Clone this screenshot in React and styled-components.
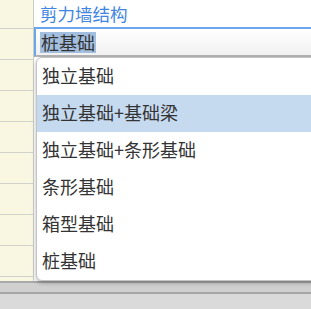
import React from 'react'
import styled, { createGlobalStyle } from 'styled-components'

const GlobalStyle = createGlobalStyle`
  html, body {
    margin: 0;
    padding: 0;
    background: #fff;
    overflow: hidden;
  }
  body {
    font-family: "Noto Sans CJK SC", "Noto Sans", sans-serif;
  }
`

const Frame = styled.div`
  position: relative;
  width: 311px;
  height: 309px;
  display: flex;
  flex-direction: column;
  overflow: hidden;
`

const Sheet = styled.div`
  display: flex;
  height: 281px;
`

const Gutter = styled.div`
  width: 33px;
  background: #f9f6e2;
  border-right: 1px solid #cdcdc8;
  display: flex;
  flex-direction: column;
`

const GutterRow = styled.div`
  height: ${props => props.h}px;
  flex-shrink: 0;
  border-bottom: 1px solid #d2d2cc;
`

const Main = styled.div`
  flex: 1;
  display: flex;
  flex-direction: column;
  background: #fff;
`

const Label = styled.div`
  height: 27px;
  padding-left: 6px;
  display: flex;
  align-items: center;
  color: #3f86e2;
  font-size: 17.5px;
`

const Input = styled.div`
  height: 26px;
  border-top: 2px solid #6aa7ea;
  border-left: 2px solid #6aa7ea;
  border-bottom: 2px solid #b4b4b4;
  background: linear-gradient(#ffffff, #f1f1f1);
  padding-left: 4px;
  display: flex;
  align-items: center;
  font-size: 18px;
  color: #333;
`

const Selected = styled.span`
  background: #a3bfe0;
  line-height: 21px;
  padding: 0 1px;
`

const Footer = styled.div`
  flex: 1;
  border-top: 2px solid #a9a9a9;
  background: #dadada;
  display: flex;
  flex-direction: column;
`

const FooterBand = styled.div`
  height: 9px;
  background: #d0d0d0;
  border-bottom: 2px solid #a6a6a6;
`

const Menu = styled.div`
  position: absolute;
  left: 36px;
  top: 57px;
  width: 290px;
  background: #fff;
  border: 1px solid #c4c4c4;
  border-radius: 6px;
  box-shadow: 0 2px 4px rgba(0, 0, 0, 0.28);
  display: flex;
  flex-direction: column;
  overflow: hidden;
`

const Item = styled.div`
  height: 37px;
  padding-left: 5px;
  padding-bottom: 3px;
  box-sizing: border-box;
  display: flex;
  align-items: center;
  font-size: 18px;
  color: #333;
  background: ${props => (props.active ? '#c6daef' : 'transparent')};
`

const rows = [28, 30, 30, 30, 30, 30, 30, 30, 30]
const options = ['独立基础', '独立基础+基础梁', '独立基础+条形基础', '条形基础', '箱型基础', '桩基础']

const App = () => (
  <Frame>
    <GlobalStyle />
    <Sheet>
      <Gutter>
        {rows.map((h, i) => <GutterRow key={i} h={h} />)}
      </Gutter>
      <Main>
        <Label>剪力墙结构</Label>
        <Input><Selected>桩基础</Selected></Input>
      </Main>
    </Sheet>
    <Footer>
      <FooterBand />
    </Footer>
    <Menu>
      {options.map((o, i) => (
        <Item key={o} active={i === 1}>{o}</Item>
      ))}
    </Menu>
  </Frame>
)

export default App
